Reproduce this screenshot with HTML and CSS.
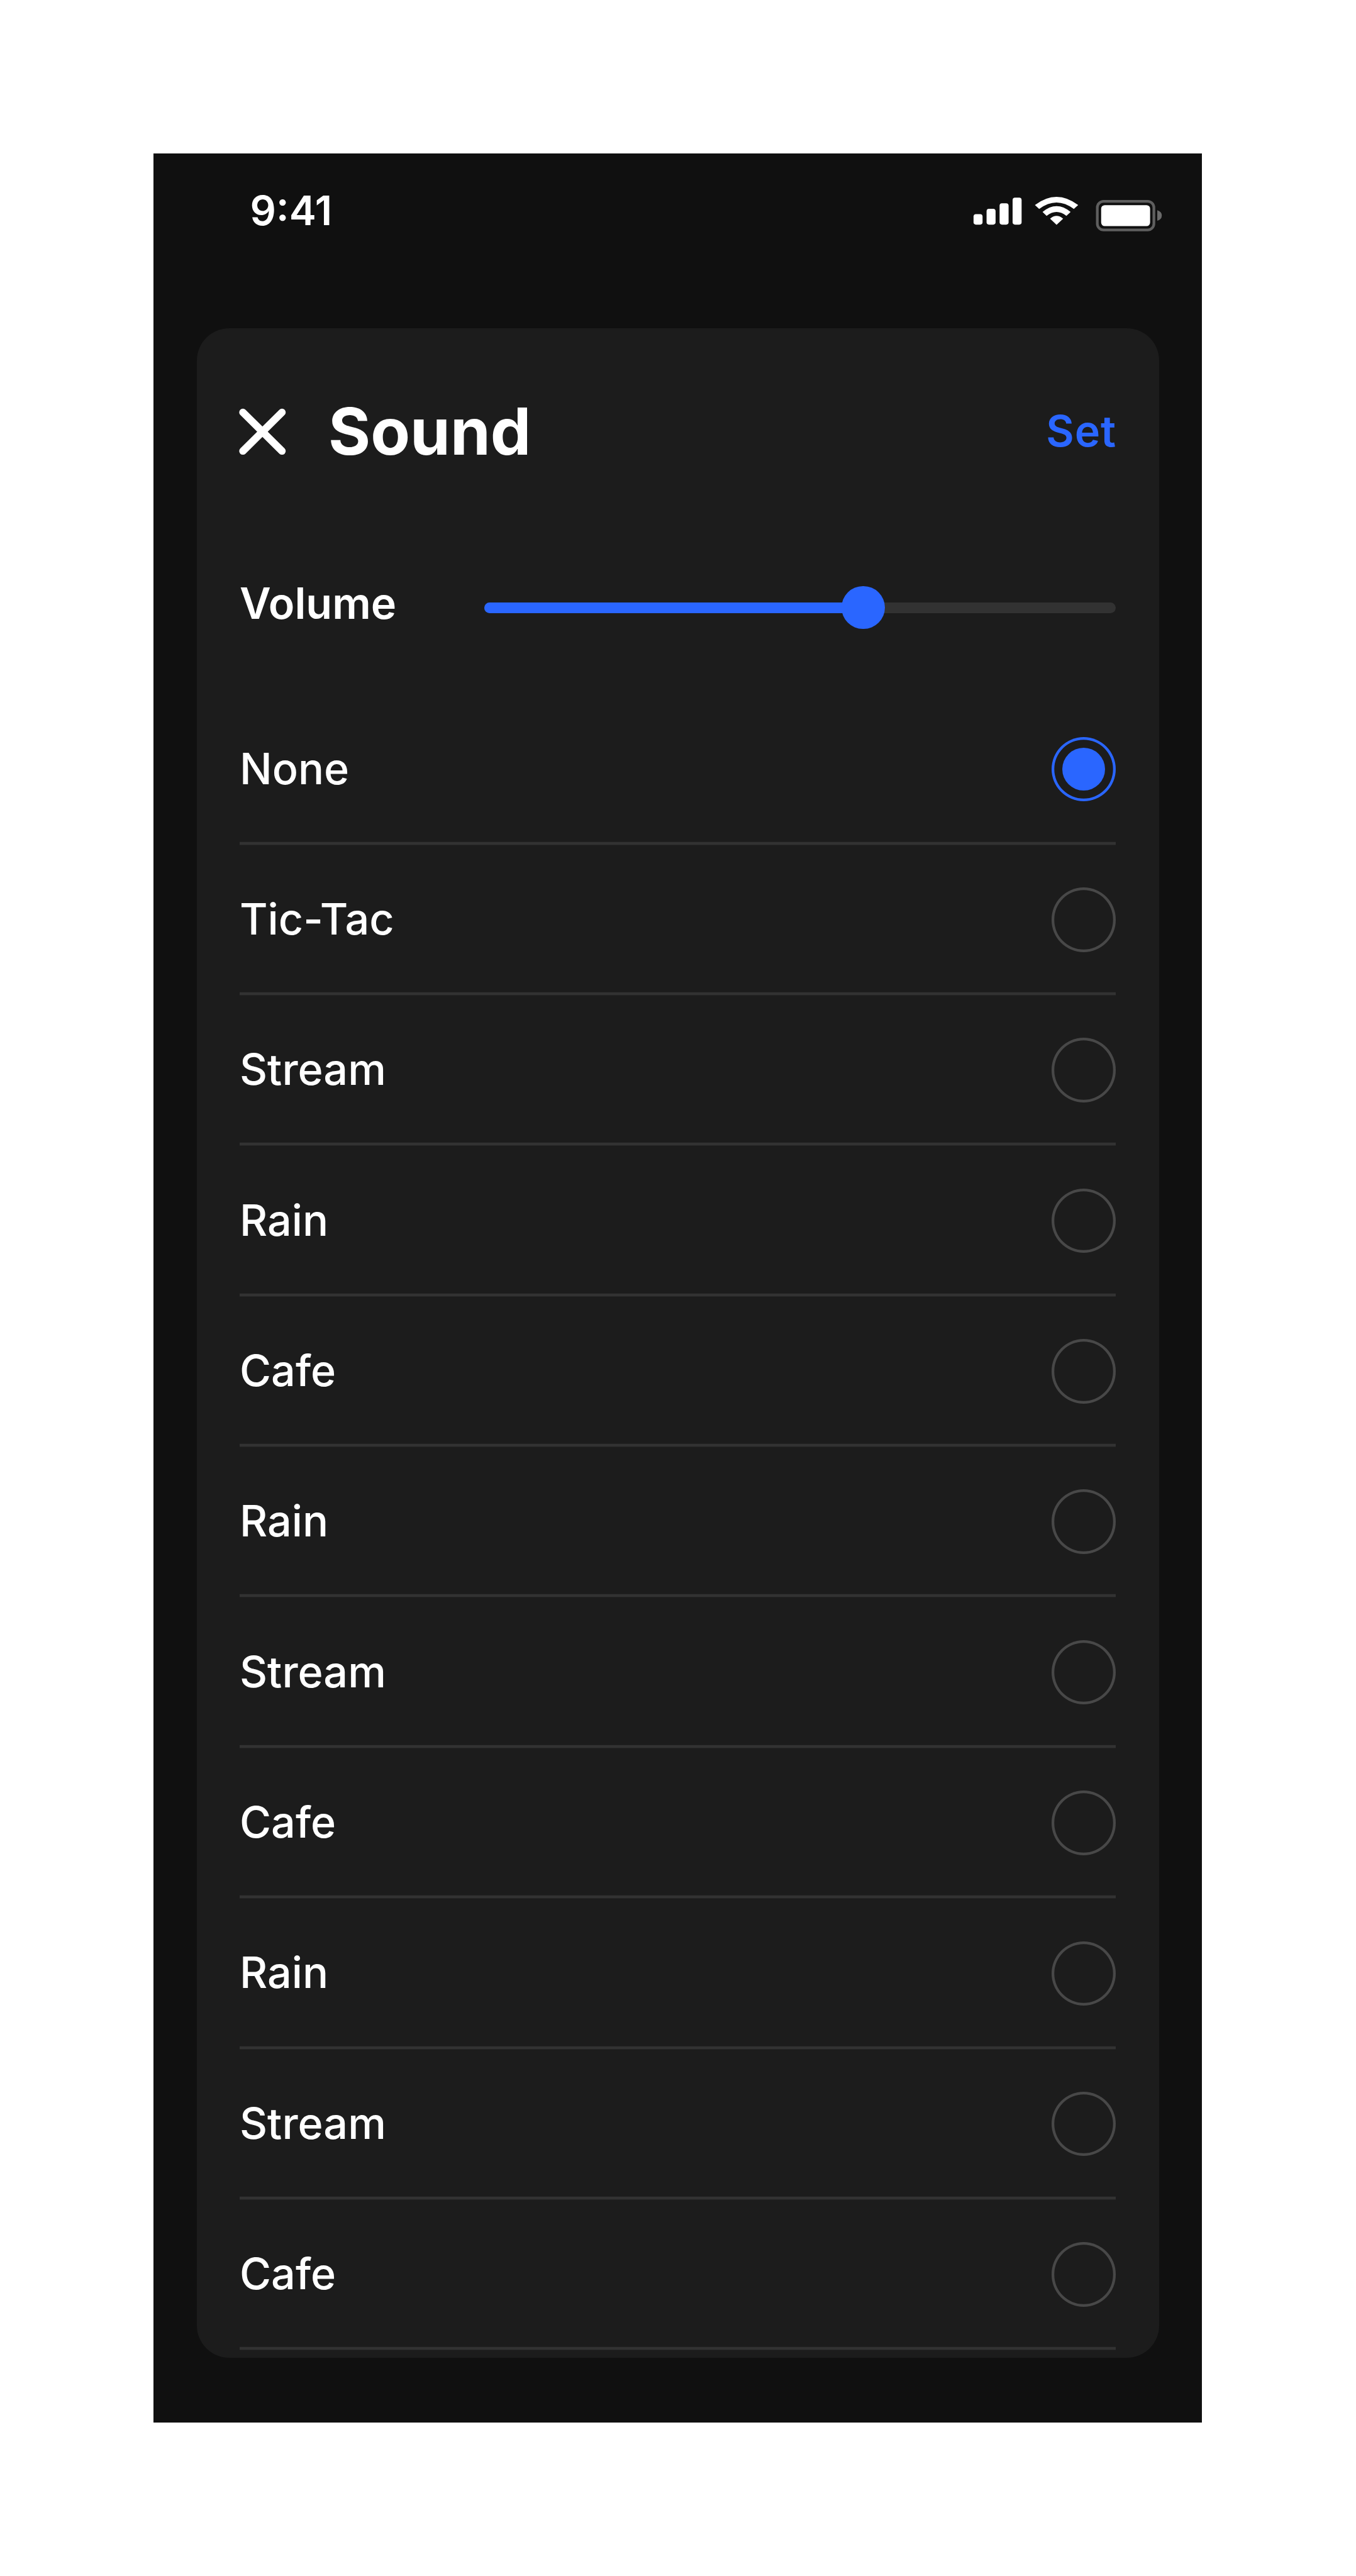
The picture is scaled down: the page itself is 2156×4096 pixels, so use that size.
FILE: index.html
```html
<!DOCTYPE html>
<html lang="en">
<head>
<meta charset="utf-8">
<title>Sound</title>
<link rel="stylesheet" href="styles.css">
</head>
<body>
<main class="phone">
  <div class="status">
    <span class="time">9:41</span>
    <svg class="status-icons" viewBox="1620 324 320 64" fill="#fff">
      <rect x="1622" y="357" width="15" height="17.5" rx="4"/>
      <rect x="1643.7" y="348.2" width="15" height="26.3" rx="4"/>
      <rect x="1665.4" y="339" width="15" height="35.5" rx="4"/>
      <rect x="1687.1" y="329.6" width="15" height="44.9" rx="4"/>
      <path d="M1724.3 341.8Q1760.3 314.4 1796.4 341.8L1789.2 348.5Q1760.3 327 1731.4 348.5Z"/>
      <path d="M1737 353.4Q1760.3 334 1783.8 353.4L1776.8 360Q1760.3 346.8 1743.8 360Z"/>
      <path d="M1749.6 364.6Q1760.3 355.2 1771.3 364.6L1760.4 374.8Z"/>
      <rect x="1828.3" y="335.6" width="94.3" height="47.8" rx="10.5" fill="none" stroke="#5f5f5f" stroke-width="4.5"/>
      <rect x="1834.7" y="342" width="81.6" height="35" rx="6"/>
      <path d="M1928.3 350.5Q1935.8 353 1935.8 359.3T1928.3 368Z" fill="#6b6b6b"/>
    </svg>
  </div>
  <section class="card">
    <header class="header">
      <svg class="close" viewBox="0 0 18 18"><path d="M1.45 1.8 16 16.2M16 1.8 1.45 16.2"/></svg>
      <h1 class="title">Sound</h1>
      <span class="set">Set</span>
    </header>
    <div class="volume">
      <span class="volume-label">Volume</span>
      <div class="track"><div class="fill" style="width:60%"><i class="thumb"></i></div></div>
    </div>
    <ul class="list">
      <li class="row"><span class="name">None</span><i class="radio on"></i></li>
      <li class="row"><span class="name">Tic-Tac</span><i class="radio"></i></li>
      <li class="row"><span class="name">Stream</span><i class="radio"></i></li>
      <li class="row"><span class="name">Rain</span><i class="radio"></i></li>
      <li class="row"><span class="name">Cafe</span><i class="radio"></i></li>
      <li class="row"><span class="name">Rain</span><i class="radio"></i></li>
      <li class="row"><span class="name">Stream</span><i class="radio"></i></li>
      <li class="row"><span class="name">Cafe</span><i class="radio"></i></li>
      <li class="row"><span class="name">Rain</span><i class="radio"></i></li>
      <li class="row"><span class="name">Stream</span><i class="radio"></i></li>
      <li class="row"><span class="name">Cafe</span><i class="radio"></i></li>
    </ul>
  </section>
</main>
</body>
</html>
```
FILE: styles.css
```css
/* 1rem = 10 design points */
html { font-size: 42.744px; background: #fff; }
* { box-sizing: border-box; }
body {
  margin: 0;
  padding: 5.713rem 0 0 5.713rem;
  font-family: Inter, "Liberation Sans", sans-serif;
  color: #fff;
  overflow: hidden;
}
.phone {
  width: 39rem;
  height: 84.4rem;
  padding: 0 1.6rem;
  background: #101010;
}
.status {
  display: flex;
  justify-content: space-between;
  align-items: flex-start;
  height: 6.5rem;
  padding: 1.21rem 0 0 1.99rem;
}
.time { margin-top: 0.02rem; font-size: 1.515rem; line-height: 1.8rem; font-weight: 600; }
.status-icons {
  width: 305.25px;
  height: 61.05px;
  margin: 0.31rem -0.2rem 0 0;
}
.card {
  height: 75.5rem;
  padding: 2.23rem 1.6rem 0;
  border-radius: 1.2rem;
  background: #1c1c1c;
  overflow: hidden;
}
.header { display: flex; align-items: center; height: 3.2rem; }
.close {
  width: 1.8rem;
  height: 1.8rem;
  margin: 0.03rem 0 0 -0.03rem;
  fill: none;
  stroke: #fff;
  stroke-width: 2.75;
  stroke-linecap: round;
}
.title {
  flex: 1;
  margin: 0.04rem 0 0 1.53rem;
  font-size: 2.4rem;
  line-height: 3.2rem;
  font-weight: 700;
}
.set {
  margin-right: -0.02rem;
  font-size: 1.6rem;
  line-height: 2.4rem;
  font-weight: 600;
  letter-spacing: 0.015em;
  color: #2a66ff;
}
.volume {
  display: flex;
  justify-content: space-between;
  align-items: center;
  height: 2.4rem;
  margin-top: 3.59rem;
}
.volume-label { font-size: 1.6rem; line-height: 2.4rem; font-weight: 600; }
.track {
  width: 23.5rem;
  height: 0.4rem;
  margin-top: 0.35rem;
  border-radius: 0.2rem;
  background: #323232;
}
.fill {
  display: flex;
  justify-content: flex-end;
  align-items: center;
  height: 100%;
  border-radius: 0.2rem;
  background: #2a66ff;
}
.thumb {
  flex: none;
  width: 1.6rem;
  height: 1.6rem;
  margin-right: -0.8rem;
  border-radius: 50%;
  background: #2a66ff;
}
.list { margin: 2.18rem 0 0; padding: 0; list-style: none; }
.row {
  display: flex;
  justify-content: space-between;
  align-items: center;
  height: 5.6rem;
  font-size: 1.6rem;
  line-height: 2.4rem;
  font-weight: 500;
  box-shadow: inset 0 -0.1rem #323232, 0 0.01rem #323232;
}
.name { padding-bottom: 0.05rem; }
.radio {
  display: grid;
  place-items: center;
  width: 2.4rem;
  height: 2.4rem;
  border-radius: 50%;
  box-shadow: inset 0 0 0 0.1rem #484848;
}
.radio.on { box-shadow: inset 0 0 0 0.1rem #2a66ff; }
.radio.on::before {
  content: "";
  width: 1.6rem;
  height: 1.6rem;
  border-radius: 50%;
  background: #2a66ff;
}
```
